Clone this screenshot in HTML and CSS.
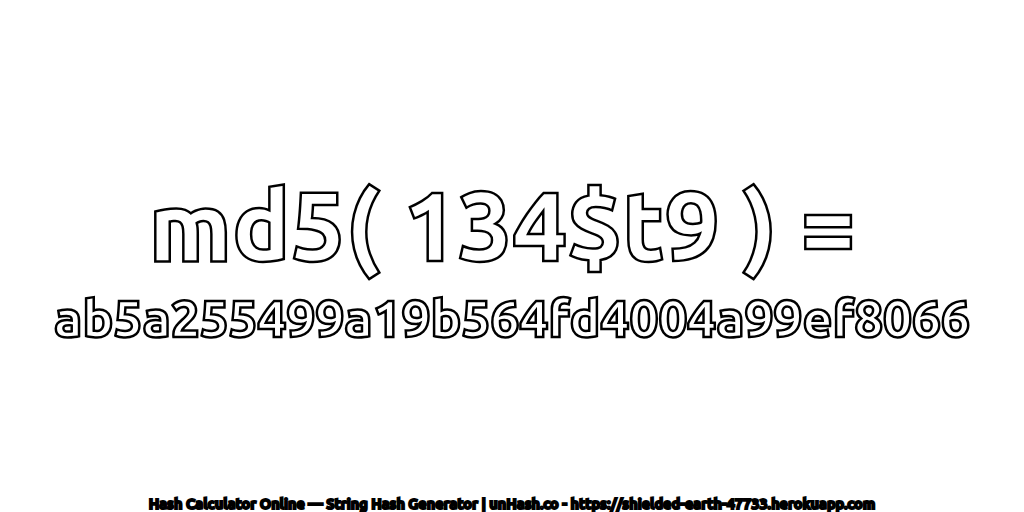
FILE: index.html
```html
<!DOCTYPE html>
<html lang="en">
<head>
    <meta charset="UTF-8">
    <title>unHash</title>
    <link rel="stylesheet" href="styles.css">
</head>
<body>
    <div class="result">
        <h1 class="title">md5( 134$t9 ) =</h1>
        <div class="hash">ab5a255499a19b564fd4004a99ef8066</div>
    </div>
    <div class="footer">Hash Calculator Online — String Hash Generator | unHash.co - https://shielded-earth-47733.herokuapp.com</div>
</body>
</html>
```
FILE: styles.css
```css
body {
    margin: 0;
    width: 1024px;
    height: 512px;
    overflow: hidden;
    background: white;
    display: flex;
    flex-direction: column;
    align-items: center;
    font-family: "Ubuntu", "Noto Sans", sans-serif;
    color: white;
}

.result {
    flex: 1;
    display: flex;
    flex-direction: column;
    align-items: center;
    justify-content: center;
    padding-top: 19px;
}

.title {
    margin: 0;
    padding-right: 20px;
    font-size: 97px;
    font-weight: 900;
    line-height: 106px;
    white-space: nowrap;
    -webkit-text-stroke: 2.5px black;
}

.hash {
    margin-top: 15px;
    font-size: 51.3px;
    font-weight: 900;
    line-height: 50px;
    white-space: nowrap;
    -webkit-text-stroke: 2.5px black;
}

.footer {
    font-size: 14.5px;
    font-weight: 700;
    line-height: 16px;
    white-space: nowrap;
    -webkit-text-stroke: 2px black;
}
```
